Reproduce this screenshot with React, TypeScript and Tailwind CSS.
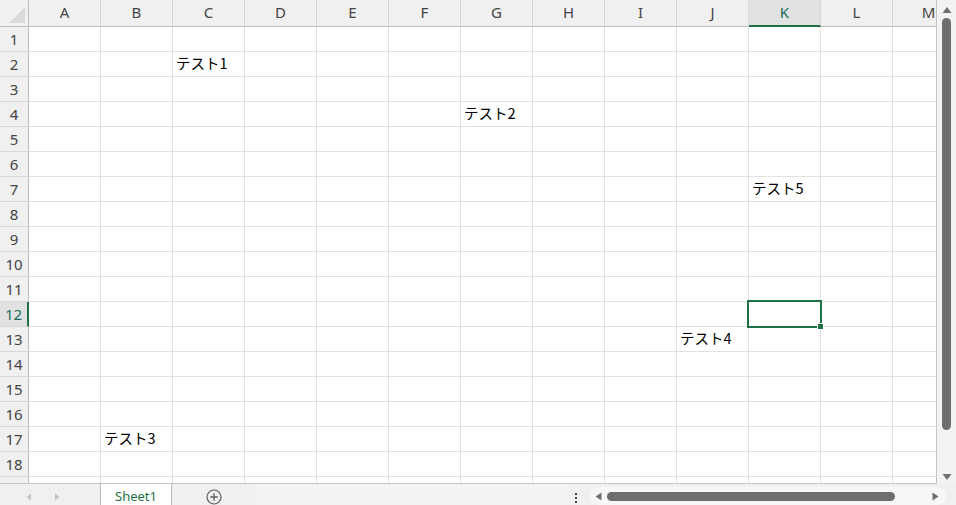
import { Fragment } from 'react'

const COLS = ['A', 'B', 'C', 'D', 'E', 'F', 'G', 'H', 'I', 'J', 'K', 'L', 'M']
const ROWS = Array.from({ length: 19 }, (_, i) => i + 1)

// "col:row" -> text
const CELLS: Record<string, string> = {
  'C:2': 'テスト1',
  'G:4': 'テスト2',
  'B:17': 'テスト3',
  'J:13': 'テスト4',
  'K:7': 'テスト5',
}

const SEL_COL = 'K'
const SEL_ROW = 12

export default function App() {
  return (
    <div
      className="w-[956px] h-[505px] flex flex-col bg-white overflow-hidden select-none"
      style={{ fontFamily: '"Noto Sans", "Noto Sans CJK JP", sans-serif' }}
    >
      {/* シート本体 + 縦スクロール */}
      <div className="flex h-[484px]">
        <div className="relative w-[937px] h-[484px] overflow-hidden border-r border-b border-[#c6c6c6]">
          <div className="grid grid-cols-[29px_repeat(13,72px)] auto-rows-[25px] [grid-template-rows:27px]">
            {/* 左上の角 */}
            <div className="h-[27px] bg-[#f0f0f0] border-r border-b border-[#bdbdbd] flex items-end justify-end p-[3px]">
              <svg width="16" height="16" viewBox="0 0 16 16">
                <path d="M16 0 L16 16 L0 16 Z" fill="#dadada" />
              </svg>
            </div>
            {COLS.map(c => {
              const sel = c === SEL_COL
              return (
                <div
                  key={c}
                  className={
                    sel
                      ? 'h-[27px] pb-[1px] bg-[#e1e1e1] border-r border-[#d4d4d4] border-b-2 border-b-[#1e7145] flex items-center justify-center text-[15px] text-[#1e6e5a]'
                      : 'h-[27px] pb-[2px] bg-[#f0f0f0] border-r border-[#d9d9d9] border-b border-b-[#bdbdbd] flex items-center justify-center text-[15px] text-[#444]'
                  }
                >
                  {c}
                </div>
              )
            })}

            {ROWS.map(r => {
              const selRow = r === SEL_ROW
              return (
                <Fragment key={r}>
                  <div
                    className={
                      selRow
                        ? 'h-[25px] bg-[#e1e1e1] border-r-2 border-r-[#1e7145] border-b border-b-[#d4d4d4] flex items-center justify-center text-[15px] text-[#1e6e5a]'
                        : 'h-[25px] bg-[#f0f0f0] border-r border-r-[#bdbdbd] border-b border-b-[#d9d9d9] flex items-center justify-center text-[15px] text-[#444]'
                    }
                  >
                    {r}
                  </div>
                  {COLS.map(c => (
                    <div
                      key={c}
                      className="h-[25px] border-r border-b border-[#e1e1e1] flex items-center pl-[3px] pb-[3px] text-[14.5px] text-black whitespace-nowrap overflow-visible"
                      style={{ fontFamily: '"Noto Sans CJK JP", sans-serif' }}
                    >
                      {CELLS[`${c}:${r}`] ?? ''}
                    </div>
                  ))}
                </Fragment>
              )
            })}
          </div>

          {/* 選択セル K12 */}
          <div className="absolute left-[747px] top-[300px] w-[75px] h-[28px] border-2 border-[#1e7145]" />
          <div className="absolute left-[817px] top-[323px] w-[7px] h-[7px] bg-[#1e7145] border border-white" />
        </div>

        {/* 縦スクロールバー */}
        <div className="w-[19px] h-[484px] bg-[#f3f3f3] flex flex-col items-center">
          <svg width="10" height="8" viewBox="0 0 10 8" className="mt-[6px]">
            <path d="M5 1 L9.5 7 L0.5 7 Z" fill="#707070" />
          </svg>
          <div className="mt-[4px] w-[9px] h-[412px] rounded-full bg-[#6e6e6e]" />
          <div className="flex-1" />
          <svg width="10" height="8" viewBox="0 0 10 8" className="mb-[3px]">
            <path d="M0.5 1 L9.5 1 L5 7 Z" fill="#707070" />
          </svg>
        </div>
      </div>

      {/* 下部バー */}
      <div className="flex h-[21px] bg-[#f0f0f0]">
        <div className="w-[100px] h-full flex items-center gap-[22px] pl-[26px] pt-[5px]">
          <svg width="6" height="8" viewBox="0 0 6 8">
            <path d="M5 0.5 L5 7.5 L0.5 4 Z" fill="#c4c4c4" />
          </svg>
          <svg width="6" height="8" viewBox="0 0 6 8">
            <path d="M1 0.5 L1 7.5 L5.5 4 Z" fill="#c4c4c4" />
          </svg>
        </div>
        <div className="w-[72px] h-full pt-[4px] bg-white border-x border-[#bdbdbd] flex items-center justify-center text-[13px] text-[#1e7145]">
          Sheet1
        </div>
        <div className="w-[84px] h-full pt-[5px] flex items-center justify-center">
          <svg width="16" height="16" viewBox="0 0 16 16">
            <circle cx="8" cy="8" r="7" fill="none" stroke="#5f5f5f" strokeWidth="1.2" />
            <path d="M8 4.2 V11.8 M4.2 8 H11.8" stroke="#5f5f5f" strokeWidth="1.3" />
          </svg>
        </div>
        <div className="flex-1 h-full bg-[#f3f3f3]" />
        <div className="w-[14px] h-full flex flex-col items-center justify-center gap-[2px] pt-[6px]">
          <div className="w-[2px] h-[2px] bg-[#444]" />
          <div className="w-[2px] h-[2px] bg-[#444]" />
          <div className="w-[2px] h-[2px] bg-[#444]" />
        </div>
        <div className="w-[356px] h-[18px] mt-[3px] ml-[7px] mr-[10px] rounded-full bg-[#f7f7f7] flex items-center px-[5px] pt-[1px]">
          <svg width="7" height="9" viewBox="0 0 7 9">
            <path d="M6.5 0.5 L6.5 8.5 L0.5 4.5 Z" fill="#707070" />
          </svg>
          <div className="ml-[5px] w-[288px] h-[9px] rounded-full bg-[#6e6e6e]" />
          <div className="flex-1" />
          <svg width="7" height="9" viewBox="0 0 7 9" className="mr-[2px]">
            <path d="M0.5 0.5 L0.5 8.5 L6.5 4.5 Z" fill="#707070" />
          </svg>
        </div>
      </div>
    </div>
  )
}
